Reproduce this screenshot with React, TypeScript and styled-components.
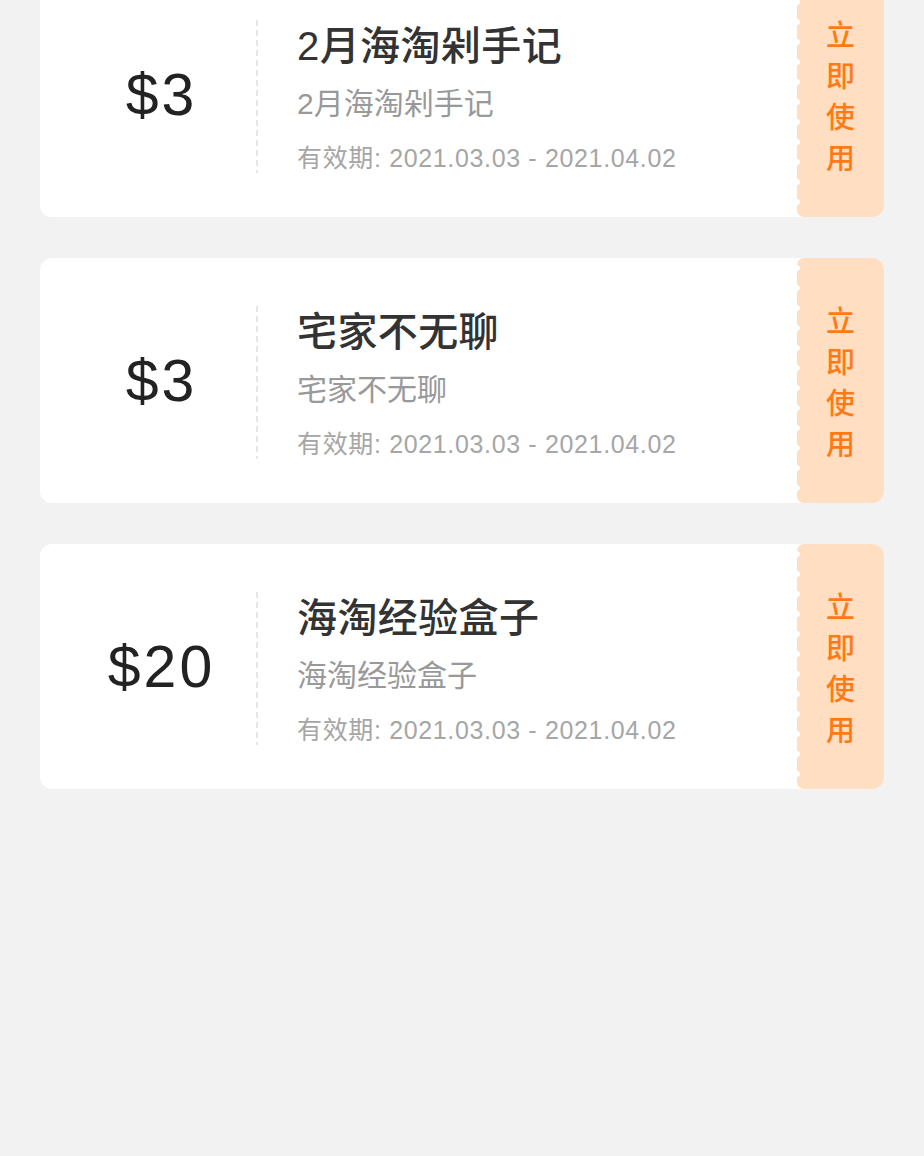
import React from "react";
import styled, { createGlobalStyle } from "styled-components";

const GlobalStyle = createGlobalStyle`
  html, body {
    margin: 0;
    padding: 0;
    background: #f2f2f2;
  }
  body {
    font-family: "Liberation Sans", "Noto Sans CJK SC", sans-serif;
  }
  * { box-sizing: border-box; }
`;

const Page = styled.div`
  display: flex;
  flex-direction: column;
  gap: 41px;
  padding: 0 40px;
  margin-top: -28px;
`;

const Card = styled.div`
  display: flex;
  align-items: center;
  height: 245px;
  background: #ffffff;
  border-radius: 12px;
  overflow: hidden;
`;

const Amount = styled.div`
  flex: 0 0 216px;
  padding-left: 27px;
  text-align: center;
  font-family: "Liberation Sans", "Noto Sans", sans-serif;
  font-size: 59px;
  color: #222222;
  letter-spacing: 3px;
`;

const Divider = styled.div`
  flex: 0 0 2px;
  height: 153px;
  margin-top: 4px;
  background: repeating-linear-gradient(
    to bottom,
    #e6e6e6 0 6px,
    transparent 6px 10px
  );
`;

const Info = styled.div`
  flex: 1;
  align-self: stretch;
  display: flex;
  flex-direction: column;
  padding-top: 50px;
  padding-left: 39px;
  font-family: "Liberation Sans", "Noto Sans CJK SC", sans-serif;
`;

const Title = styled.div`
  font-size: 40px;
  line-height: 48px;
  font-weight: 500;
  color: #333333;
  letter-spacing: 0.4px;
`;

const Subtitle = styled.div`
  margin-top: 14px;
  font-size: 30px;
  line-height: 40px;
  color: #999999;
`;

const DateLine = styled.div`
  margin-top: 18px;
  font-size: 25px;
  line-height: 32px;
  color: #a6a6a6;
  letter-spacing: 0.65px;
`;

const Stub = styled.div`
  position: relative;
  flex: 0 0 87px;
  align-self: stretch;
  display: flex;
  align-items: center;
  justify-content: center;
  background: #ffdec2;
  border-radius: 7px 0 0 7px;

  &::before {
    content: "";
    position: absolute;
    left: -3px;
    top: 0;
    bottom: 0;
    width: 6px;
    background: radial-gradient(circle at 3px 10px, #ffffff 2.6px, transparent 3.2px);
    background-size: 6px 20px;
    background-repeat: repeat-y;
  }
`;

const StubText = styled.div`
  width: 1em;
  font-family: "Noto Sans CJK SC", sans-serif;
  font-size: 29px;
  line-height: 41px;
  font-weight: 500;
  color: #ff7a14;
  text-align: center;
`;

type Coupon = { amount: string; title: string; subtitle: string; validity: string };

const coupons: Coupon[] = [
  { amount: "$3", title: "2月海淘剁手记", subtitle: "2月海淘剁手记", validity: "有效期: 2021.03.03 - 2021.04.02" },
  { amount: "$3", title: "宅家不无聊", subtitle: "宅家不无聊", validity: "有效期: 2021.03.03 - 2021.04.02" },
  { amount: "$20", title: "海淘经验盒子", subtitle: "海淘经验盒子", validity: "有效期: 2021.03.03 - 2021.04.02" },
];

export default function App() {
  return (
    <>
      <GlobalStyle />
      <Page>
        {coupons.map((c, i) => (
          <Card key={i}>
            <Amount>{c.amount}</Amount>
            <Divider />
            <Info>
              <Title>{c.title}</Title>
              <Subtitle>{c.subtitle}</Subtitle>
              <DateLine>{c.validity}</DateLine>
            </Info>
            <Stub>
              <StubText>立即使用</StubText>
            </Stub>
          </Card>
        ))}
      </Page>
    </>
  );
}
